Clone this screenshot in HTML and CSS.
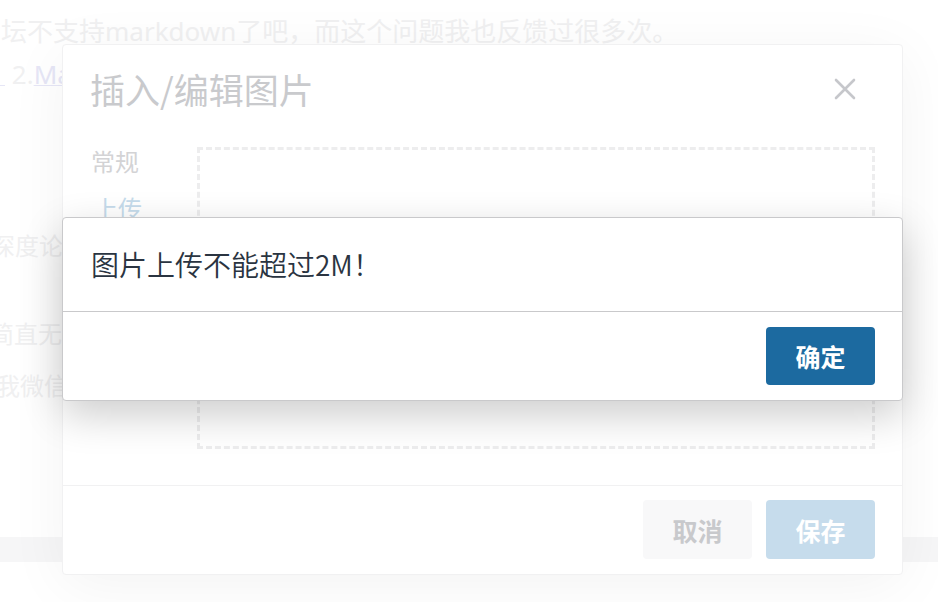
FILE: index.html
```html
<!DOCTYPE html>
<html lang="zh-CN">
<head>
<meta charset="utf-8">
<title>插入/编辑图片</title>
<link rel="stylesheet" href="styles.css">
</head>
<body>
<main class="page">
  <p class="line line-first">坛不支持markdown了吧，而这个问题我也反馈过很多次。</p>
  <p class="line line-second"><a class="link-end" href="#">。</a> 2.<a class="link" href="#">Markdown编辑器</a></p>
  <p class="line line-deep">深度论坛的编辑器</p>
  <p class="line line-jian">简直无法使用</p>
  <p class="line line-wx">我微信里也说过</p>
  <div class="page-band"></div>
</main>

<section class="dialog dialog-image">
  <header class="dialog-header">
    <h2 class="dialog-title">插入/编辑图片</h2>
    <button class="close-btn" type="button" aria-label="关闭">
      <svg width="22" height="22" viewBox="0 0 22 22"><path d="M2 2 L20 20 M20 2 L2 20" stroke="#c6c7cb" stroke-width="2.6" stroke-linecap="round" fill="none"/></svg>
    </button>
  </header>
  <div class="dialog-body">
    <nav class="tabs">
      <span class="tab">常规</span>
      <span class="tab tab-active">上传</span>
    </nav>
    <div class="dropzone"></div>
  </div>
  <footer class="dialog-footer">
    <button class="btn btn-cancel" type="button">取消</button>
    <button class="btn btn-save" type="button">保存</button>
  </footer>
</section>

<section class="alert">
  <div class="alert-body">图片上传不能超过2M！</div>
  <footer class="alert-footer">
    <button class="btn btn-ok" type="button">确定</button>
  </footer>
</section>
</body>
</html>
```

FILE: styles.css
```css
html, body {
  margin: 0;
  padding: 0;
}
body {
  width: 938px;
  height: 602px;
  overflow: hidden;
  background: #ffffff;
  font-family: "Noto Sans", "Noto Sans CJK SC", sans-serif;
  position: relative;
}
.page {
  padding-top: 13px;
  color: #f0f0f1;
}
.line {
  margin: 0;
  font-size: 26px;
  line-height: 36px;
  white-space: nowrap;
}
.line-first {
  margin-left: 1px;
}
.line-second {
  margin-top: 7px;
  margin-left: -21px;
}
.link-end, .link {
  color: #e6e6f6;
  text-decoration: underline;
  text-decoration-thickness: 1px;
}
.line-deep {
  margin-top: 136px;
  margin-left: -9px;
  font-size: 24px;
}
.line-jian {
  margin-top: 52px;
  margin-left: -10px;
  font-size: 24px;
}
.line-wx {
  margin-top: 16px;
  margin-left: -4px;
  font-size: 24px;
}
.page-band {
  margin-top: 133px;
  height: 25px;
  background: #f6f6f7;
}

.dialog {
  position: absolute;
  left: 62px;
  top: 44px;
  width: 841px;
  height: 531px;
  box-sizing: border-box;
  background: #fff;
  border: 1px solid #f1f1f2;
  border-radius: 4px;
  box-shadow: 0 10px 60px rgba(0, 0, 0, 0.05);
  display: flex;
  flex-direction: column;
  font-family: "Noto Sans CJK SC", "Noto Sans", sans-serif;
}
.dialog-header {
  display: flex;
  align-items: center;
  justify-content: space-between;
  padding: 18px 46px 0 27px;
  height: 52px;
}
.dialog-title {
  margin: 0;
  font-size: 35px;
  font-weight: 400;
  color: #c9cacd;
  line-height: 48px;
}
.close-btn {
  border: 0;
  background: none;
  padding: 0;
  width: 22px;
  height: 22px;
  display: flex;
}
.dialog-body {
  display: flex;
  padding: 32px 27px 0 27px;
  height: 370px;
  box-sizing: border-box;
}
.tabs {
  width: 107px;
  display: flex;
  flex-direction: column;
  gap: 13px;
  margin-top: -3px;
}
.tab {
  font-size: 24px;
  line-height: 34px;
  color: #d3d3d5;
  padding-left: 1px;
}
.tab-active {
  color: #c5dbeb;
  padding-left: 4px;
}
.dropzone {
  width: 679px;
  height: 302px;
  box-sizing: border-box;
  border: 3px dashed #ededee;
}
.dialog-footer {
  border-top: 1px solid #f1f1f2;
  display: flex;
  justify-content: flex-end;
  gap: 14px;
  padding: 14px 27px 0 0;
}

.btn {
  border: 0;
  border-radius: 4px;
  width: 109px;
  height: 59px;
  font-family: "Noto Sans CJK SC", sans-serif;
  font-size: 25px;
  font-weight: 700;
  padding: 0;
}
.btn-cancel {
  background: #f8f8f9;
  color: #c8c9cc;
}
.btn-save {
  background: #c6dcec;
  color: #ffffff;
}

.alert {
  position: absolute;
  left: 62px;
  top: 217px;
  width: 841px;
  height: 184px;
  box-sizing: border-box;
  background: #fff;
  border: 1px solid #c9c9cb;
  border-radius: 4px;
  box-shadow: 0 14px 40px rgba(0, 0, 0, 0.2);
  display: flex;
  flex-direction: column;
  font-family: "Noto Sans CJK SC", "Noto Sans", sans-serif;
}
.alert-body {
  height: 93px;
  box-sizing: border-box;
  padding: 28px 28px 0 28px;
  font-size: 28px;
  line-height: 36px;
  font-weight: 350;
  color: #2a3441;
}
.alert-footer {
  border-top: 1px solid #c9c9cb;
  display: flex;
  justify-content: flex-end;
  padding: 15px 27px 0 0;
}
.btn-ok {
  background: #1c6aa0;
  color: #ffffff;
  height: 58px;
}
```
